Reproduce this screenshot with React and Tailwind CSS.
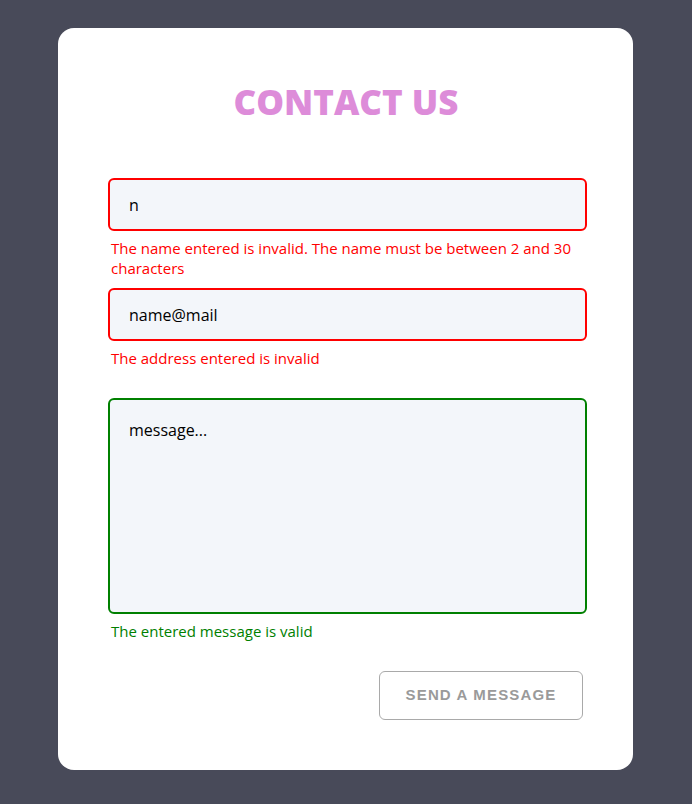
import { useState } from 'react'

const Field = ({ children, message, valid }) => (
  <div className="flex flex-col">
    {children}
    <p
      className={`mt-[7px] mb-[10px] min-h-[40px] pl-[3px] text-[15px] leading-[20px] ${
        valid ? 'text-[#008000]' : 'text-[#ff0000]'
      }`}
    >
      {message}
    </p>
  </div>
)

const App = () => {
  const [name, setName] = useState('n')
  const [email, setEmail] = useState('name@mail')
  const [message, setMessage] = useState('message...')

  return (
    <div
      className="min-h-[804px] bg-[#484a59] pt-[28px] pl-[58px]"
      style={{ fontFamily: '"Open Sans", "Noto Sans", sans-serif' }}
    >
      <div className="w-[575px] bg-white rounded-[16px] pl-[50px] pr-[46px] pt-[51px] pb-[50px]">
        <h1 className="text-center text-[35px] leading-[46px] font-extrabold text-[#dd8cd9] mb-[53px] pr-[3px]">
          CONTACT US
        </h1>

        <form onSubmit={(e) => e.preventDefault()}>
          <Field message="The name entered is invalid. The name must be between 2 and 30 characters">
            <input
              value={name}
              onChange={(e) => setName(e.target.value)}
              className="h-[53px] w-full rounded-[6px] border-2 border-[#ff0000] bg-[#f3f6fa] px-[19px] text-[16px] text-black outline-none"
            />
          </Field>

          <Field message="The address entered is invalid">
            <input
              value={email}
              onChange={(e) => setEmail(e.target.value)}
              className="h-[53px] w-full rounded-[6px] border-2 border-[#ff0000] bg-[#f3f6fa] px-[19px] text-[16px] text-black outline-none"
            />
          </Field>

          <Field message="The entered message is valid" valid>
            <textarea
              value={message}
              onChange={(e) => setMessage(e.target.value)}
              className="block h-[216px] w-full resize-none rounded-[6px] border-2 border-[#008000] bg-[#f3f6fa] px-[19px] pt-[19px] text-[16px] leading-[22px] text-black outline-none"
            />
          </Field>

          <div className="flex justify-end pr-[4px]">
            <button
              type="submit"
              className="h-[49px] w-[204px] rounded-[6px] border border-[#a9a9a9] bg-white text-[15px] font-bold tracking-[1.15px] text-[#9a9a9a]"
              style={{ fontFamily: '"Liberation Sans", Arial, sans-serif' }}
            >
              SEND A MESSAGE
            </button>
          </div>
        </form>
      </div>
    </div>
  )
}

export default App
